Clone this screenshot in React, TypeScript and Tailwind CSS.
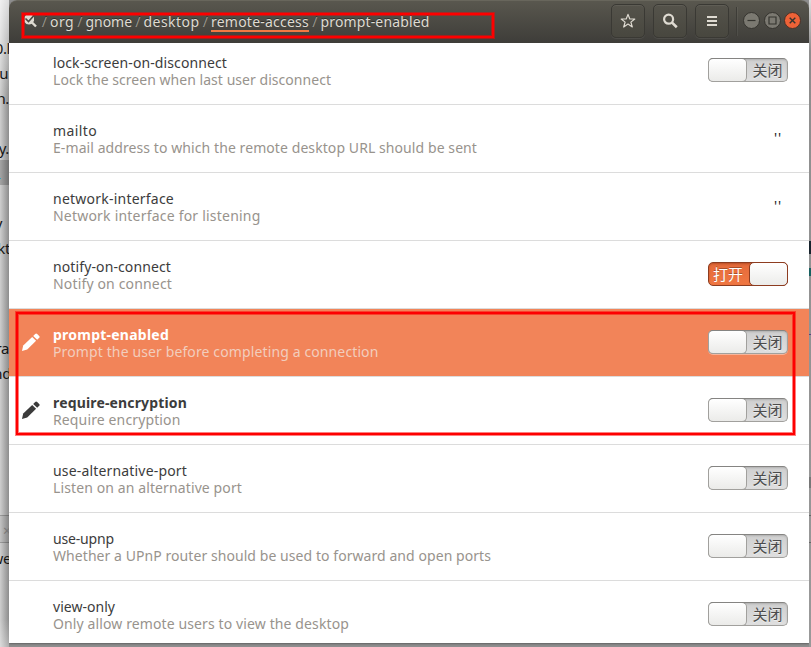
import { useLayoutEffect, useRef } from 'react';

/* Text run whose tracking is adjusted so that it spans the given width. */
function Fit({ text, width, className = '' }: { text: string; width: number; className?: string }) {
  const ref = useRef<HTMLSpanElement>(null);
  useLayoutEffect(() => {
    const el = ref.current;
    if (!el) return;
    el.style.letterSpacing = '0px';
    const natural = el.getBoundingClientRect().width;
    el.style.letterSpacing = `${(width - natural) / text.length}px`;
  }, [text, width]);
  return (
    <span ref={ref} className={`inline-block whitespace-pre ${className}`}>
      {text}
    </span>
  );
}

type Row = {
  name: string;
  nameWidth: number;
  summary: string;
  summaryWidth: number;
  value: 'on' | 'off' | 'text';
  edited?: boolean;
  selected?: boolean;
};

const rows: Row[] = [
  { name: 'lock-screen-on-disconnect', nameWidth: 174, summary: 'Lock the screen when last user disconnect', summaryWidth: 278, value: 'off' },
  { name: 'mailto', nameWidth: 44, summary: 'E-mail address to which the remote desktop URL should be sent', summaryWidth: 424, value: 'text' },
  { name: 'network-interface', nameWidth: 121, summary: 'Network interface for listening', summaryWidth: 207.5, value: 'text' },
  { name: 'notify-on-connect', nameWidth: 118, summary: 'Notify on connect', summaryWidth: 119, value: 'on' },
  { name: 'prompt-enabled', nameWidth: 116, summary: 'Prompt the user before completing a connection', summaryWidth: 325.5, value: 'off', edited: true, selected: true },
  { name: 'require-encryption', nameWidth: 134, summary: 'Require encryption', summaryWidth: 127.5, value: 'off', edited: true },
  { name: 'use-alternative-port', nameWidth: 134, summary: 'Listen on an alternative port', summaryWidth: 189, value: 'off' },
  { name: 'use-upnp', nameWidth: 61, summary: 'Whether a UPnP router should be used to forward and open ports', summaryWidth: 438, value: 'off' },
  { name: 'view-only', nameWidth: 62, summary: 'Only allow remote users to view the desktop', summaryWidth: 296, value: 'off' },
];

const crumbs = [
  { text: 'org', width: 24 },
  { text: 'gnome', width: 46.5 },
  { text: 'desktop', width: 56 },
  { text: 'remote-access', width: 98, active: true },
  { text: 'prompt-enabled', width: 109 },
];

function Switch({ on }: { on: boolean }) {
  if (on) {
    return (
      <div className="flex h-6 w-20 rounded-[5px] border border-[#8d3c20] bg-linear-to-b from-[#e46a3a] to-[#f07742] shadow-[inset_0_1px_2px_rgba(120,40,10,0.4)]">
        <span className="flex-1 pr-[2px] text-center text-[15px] leading-[22px] text-white [text-shadow:0_-1px_rgba(0,0,0,0.3)]">打开</span>
        <span className="-my-px -mr-px h-6 w-[39px] rounded-[5px] border border-[#8d3c20] bg-linear-to-b from-white to-[#ececea]" />
      </div>
    );
  }
  return (
    <div className="flex h-6 w-20 rounded-[5px] border border-[#a1a09d] border-t-[#858482] bg-linear-to-b from-[#cfcfcf] to-[#dfdfdf] shadow-[inset_0_1px_2px_rgba(0,0,0,0.15),0_1px_rgba(255,255,255,0.4)]">
      <span className="-my-px -ml-px h-6 w-[39px] rounded-[5px] border border-[#a1a09d] border-t-[#858482] bg-linear-to-b from-white to-[#ebebe9]" />
      <span className="flex-1 pl-px text-center text-[15px] leading-[22px] text-[#4c4c4c] [text-shadow:0_1px_rgba(255,255,255,0.5)]">关闭</span>
    </div>
  );
}

function Pencil() {
  return (
    <svg width="18" height="18" viewBox="0 0 18 18" fill="currentColor">
      <path d="M0 18 1.2 12.6 10.2 3.9 14.1 7.8 5.2 16.6Z" />
      <path d="M11.2 2.9 13.2.9Q14.2 0 15.2.9L17.2 2.9Q18.1 3.9 17.2 4.8L15.2 6.8Z" />
    </svg>
  );
}

function SettingRow({ row }: { row: Row }) {
  return (
    <div className={`flex h-[68px] shrink-0 items-center border-b border-[#dcdcdc] pr-[21px] ${row.selected ? 'bg-[#f28459]' : 'bg-white'}`}>
      <div className={`flex w-11 shrink-0 pb-px pl-[13px] ${row.selected ? 'text-white' : 'text-[#3b3b3b]'}`}>{row.edited && <Pencil />}</div>
      <div className="flex flex-1 flex-col items-start pt-px text-[14px] leading-[17px]">
        <Fit
          text={row.name}
          width={row.nameWidth}
          className={`${row.edited ? 'font-bold' : ''} ${row.selected ? 'text-white' : 'text-[#3c3c3c]'}`}
        />
        <Fit text={row.summary} width={row.summaryWidth} className={row.selected ? 'text-[#f2cdbd]' : 'text-[#98938d]'} />
      </div>
      {row.value === 'text' ? (
        <span className="flex pr-1.5 pb-px">
          <Fit text="''" width={8} className="text-[14px] leading-4 text-[#222]" />
        </span>
      ) : (
        <div className="pb-px">
          <Switch on={row.value === 'on'} />
        </div>
      )}
    </div>
  );
}

function HeaderButton({ children }: { children: React.ReactNode }) {
  return (
    <div className="flex h-[34px] w-[34px] items-center justify-center rounded-[5px] border border-[#3a3934] bg-linear-to-b from-[#55534b] to-[#48473f] text-[#dfdbd2] shadow-[0_1px_rgba(255,255,255,0.07),inset_0_1px_rgba(255,255,255,0.06)]">
      {children}
    </div>
  );
}

function HeaderBar() {
  return (
    <header className="flex h-[43px] shrink-0 rounded-t-lg border-t border-[#68665c] bg-linear-to-b from-[#59574e] to-[#3e3d39]">
      <div className="flex flex-1 pl-[15px] pt-[11px] text-[14px] leading-[20px] text-[#dfdbd2] [text-shadow:0_-1px_rgba(0,0,0,0.4)]">
        <svg className="mt-[3px] mr-[2.5px] shrink-0" width="13" height="14" viewBox="0 0 13 14" fill="none" stroke="#dfdbd2">
          <path d="M.5 2V7Q2 9.5 5 9.5L7.5 9 10 6V1.5L8 0H2Z" fill="#dfdbd2" stroke="none" />
          <path d="M1.5 3.5 4.5 6.5 10 .5" stroke="#4b4942" strokeWidth="1.6" />
          <path d="m7.5 7 4.5 4.5" strokeWidth="2.4" />
        </svg>
        {crumbs.map((crumb) => (
          <div key={crumb.text} className="flex">
            <span className="w-[9.5px] text-center text-[#98958c]">/</span>
            <span className={`mx-px flex h-[20px] ${crumb.active ? 'border-b-2 border-[#f27842]' : ''}`}>
              <Fit text={crumb.text} width={crumb.width} />
            </span>
          </div>
        ))}
      </div>
      <div className="flex items-start gap-2 pt-[3px]">
        <HeaderButton>
          <svg width="16" height="16" viewBox="0 0 16 16" fill="none" stroke="currentColor" strokeWidth="1.2" strokeLinejoin="round">
            <path d="M8 1.4 9.8 6H14.8L10.9 9.1 12.3 14 8 11.1 3.7 14 5.1 9.1 1.2 6H6.2Z" />
          </svg>
        </HeaderButton>
        <HeaderButton>
          <svg width="16" height="16" viewBox="0 0 16 16" fill="none" stroke="currentColor" strokeWidth="2.2">
            <circle cx="6.6" cy="6.2" r="4.5" />
            <path d="m9.8 9.4 5 4.8" strokeWidth="2.6" />
          </svg>
        </HeaderButton>
        <HeaderButton>
          <svg width="12" height="12" viewBox="0 0 12 12" fill="currentColor">
            <path d="M1 1h10v2H1zM1 5h10v2H1zM1 9h10v2H1z" />
          </svg>
        </HeaderButton>
      </div>
      <div className="ml-[7px] mt-[6px] h-[29px] w-px bg-[#3d3c37] shadow-[1px_0_rgba(255,255,255,0.06)]" />
      <div className="ml-[6px] mr-2 flex items-start gap-[3px] pt-[11px] text-[#35342f]">
        <svg className="mr-px" width="17" height="18" viewBox="0 0 17 18" fill="none" stroke="currentColor">
          <circle cx="8.5" cy="8.5" r="8" fill="#7b7971" />
          <path d="M4.5 8.5h8" strokeWidth="1.2" />
        </svg>
        <svg width="17" height="18" viewBox="0 0 17 18" fill="none" stroke="currentColor">
          <circle cx="8.5" cy="8.5" r="8" fill="#7b7971" />
          <path d="M5 5h7v7H5z" strokeWidth="1.2" />
        </svg>
        <svg width="17" height="18" viewBox="0 0 17 18" fill="none" stroke="currentColor">
          <circle cx="8.5" cy="8.5" r="8" fill="#ee6237" stroke="#4b3229" />
          <path d="m5.7 5.7 5.6 5.6m0-5.6-5.6 5.6" strokeWidth="1.4" />
        </svg>
      </div>
    </header>
  );
}

/* Bits of the window behind that peek out at the left edge. */
const peeks = [
  { text: '0.l', top: 'top-[38px]', shift: '-right-px' },
  { text: 'u', top: 'top-[63px]', shift: 'right-px' },
  { text: 'n.', top: 'top-[88px]' },
  { text: 'y.', top: 'top-[138px]' },
  { text: 'y', top: 'top-[213px]', shift: 'right-[7px]' },
  { text: 'kt', top: 'top-[238px]', shift: '-right-px' },
  { text: 'ra', top: 'top-[338px]' },
  { text: 'nd', top: 'top-[363px]', shift: '-right-[2px]' },
  { text: 'we', top: 'top-[548px]', shift: '-right-[2px]' },
];

export default function App() {
  return (
    <div className="relative flex h-[647px] w-[811px] overflow-hidden bg-[#8e8e8e] font-['Noto_Sans','Noto_Sans_CJK_SC',sans-serif]">
      <aside className="relative h-full w-[9px] shrink-0 overflow-hidden bg-linear-to-r from-[#cecece] to-[#8d8d8d] text-[15px] leading-5 tracking-[-0.4px] text-[#151515]">
        <div className="absolute inset-x-0 top-0 h-[100px] bg-linear-to-b from-white/70 to-transparent" />
        <div className="absolute inset-x-0 top-[160px] h-[25px] bg-black/20" />
        <div className="absolute left-0 top-[178px] h-px w-px bg-[#35a5bd]" />
        <div className="absolute inset-x-0 top-[515px] h-7 border-y border-black/20 bg-black/5" />
        <div className="absolute left-[3px] top-[521px] text-[14px] leading-5 text-[#777]">×</div>
        <div className="absolute inset-x-0 bottom-0 h-7 bg-linear-to-b from-transparent to-white/30" />
        {peeks.map((p) => (
          <span key={p.top} className={`absolute ${p.top} ${p.shift ?? 'right-0'}`}>
            {p.text}
          </span>
        ))}
      </aside>
      <main className="flex h-[643px] w-[800px] shrink-0 flex-col overflow-hidden rounded-t-lg shadow-[0_1px_2px_rgba(0,0,0,0.3)]">
        <HeaderBar />
        <section className="flex min-h-0 flex-1 flex-col overflow-hidden bg-white">
          <div className="-mt-1.5 flex flex-col">
            {rows.map((row) => (
              <SettingRow key={row.name} row={row} />
            ))}
          </div>
        </section>
      </main>
      <aside className="relative h-full w-0.5 shrink-0 bg-linear-to-b from-[#dedede] via-[#8e8e8e] via-8% to-[#999]">
        <div className="absolute left-0 top-[241px] h-[13px] w-0.5 bg-[#17232d]" />
        <div className="absolute left-0 top-[268px] h-2 w-0.5 bg-[#17605f]" />
        <div className="absolute left-0 top-[334px] h-px w-0.5 bg-[#554080]" />
        <div className="absolute left-0 top-[477px] h-[11px] w-0.5 bg-[#777]" />
        <div className="absolute left-0 top-[515px] h-7 w-0.5 border-y border-[#666]" />
      </aside>
      <div className="absolute left-[22px] top-[13px] h-[25px] w-[472px] border-2 border-[#fe0000] shadow-[0_0_0_1px_rgba(254,0,0,0.5),inset_0_0_0_1px_rgba(254,0,0,0.5)]" />
      <div className="absolute left-[16px] top-[312px] h-[123px] w-[779px] border-2 border-[#fe0000] shadow-[0_0_0_1px_rgba(254,0,0,0.5),inset_0_0_0_1px_rgba(254,0,0,0.5)]" />
    </div>
  );
}
